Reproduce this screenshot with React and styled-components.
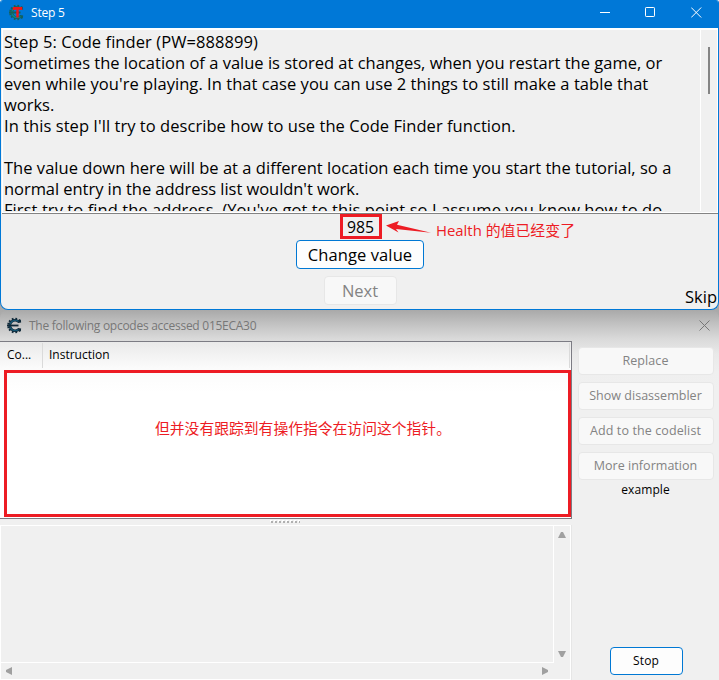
import React from "react";
import styled, { createGlobalStyle } from "styled-components";

const Global = createGlobalStyle`
  * { box-sizing: border-box; }
  body { margin: 0; background: #adadad; overflow: hidden; }
  #root { font-family: "Open Sans", "Noto Sans CJK SC", sans-serif; color: #000; }
`;

const Desktop = styled.main`
  width: 719px;
  height: 680px;
  display: flex;
  flex-direction: column;
  overflow: hidden;
  background: linear-gradient(#a6a6a6, #adadad) 0 300px / 100% 20px no-repeat, #f0f0f0;
`;

const TutorialWindow = styled.section`
  height: 310px;
  flex: none;
  display: flex;
  flex-direction: column;
  border: 1px solid #0078d7;
  border-top: 0;
  border-radius: 3px 3px 8px 8px;
  background: #f0f0f0;
  overflow: hidden;
  position: relative;
  z-index: 1;
`;

const TitleBar = styled.header`
  height: 28px;
  flex: none;
  display: flex;
  align-items: center;
  padding: 0 16px 3px 7px;
  background: #0078d7;
  color: #fff;
  font-size: 12px;
  line-height: 16px;
`;

const Title = styled.span`
  flex: 1;
  margin-left: 5px;
  white-space: nowrap;
  letter-spacing: ${(p) => p.$track || 0}px;
`;

const Caption = styled.div`
  display: flex;
  gap: 35px;
  svg { display: block; }
`;

const Memo = styled.div`
  height: 185px;
  flex: none;
  margin-left: 1px;
  display: flex;
  border: 1px solid #fff;
  border-top-width: 2px;
  overflow: hidden;
`;

const MemoText = styled.div`
  flex: 1;
  height: 181px;
  overflow: hidden;
  padding: 1px 0 0 1px;
  border-right: 1px solid #fff;
`;

const Line = styled.p`
  margin: 0;
  height: 21px;
  line-height: 21px;
  font-size: 16.5px;
  white-space: pre;
  letter-spacing: ${(p) => p.$track}px;
`;

const MemoScroll = styled.div`
  width: 16px;
  padding: 17px 0 0 7px;
`;

const Thumb = styled.div`
  width: 2px;
  height: 47px;
  background: #858585;
`;

const Controls = styled.div`
  flex: 1;
  margin-left: 1px;
  border-top: 1px solid #838383;
  display: grid;
  grid-template-columns: 1fr 128px 1fr;
`;

const ControlColumn = styled.div`
  display: flex;
  flex-direction: column;
  align-items: center;
`;

const ValueBox = styled.div`
  width: 42px;
  height: 25px;
  margin-left: 1px;
  border: 3px solid #ed1c24;
  font-size: 15.8px;
  line-height: 20px;
  text-align: center;
`;

const Button = styled.button`
  display: block;
  width: ${(p) => p.$w}px;
  height: ${(p) => p.$h}px;
  flex: none;
  padding: 0 0 ${(p) => p.$lift || 0}px;
  margin: ${(p) => p.$m || 0};
  border: 1px solid ${(p) => (p.disabled ? "#e7e7e7" : "#0078d4")};
  border-radius: 4px;
  background: ${(p) => (p.disabled ? "#f8f8f8" : "#fdfdfd")};
  color: ${(p) => (p.disabled ? "#838383" : "#000")};
  font-family: inherit;
  font-size: ${(p) => p.$size || 12.5}px;
  letter-spacing: ${(p) => p.$track || 0}px;
  line-height: 20px;
  white-space: nowrap;
`;

const Note = styled.div`
  display: flex;
  height: 40px;
  color: #ed1c24;
  font-size: 14.9px;
  line-height: 20px;
  white-space: nowrap;
  svg { flex: none; margin: 6px 4px 0 -38px; }
  span { padding-top: 6px; }
`;

const SkipColumn = styled.div`
  display: flex;
  align-items: flex-start;
  justify-content: space-between;
`;

const Skip = styled.span`
  align-self: flex-end;
  margin: 0 1px 1px -40px;
  font-size: 16.5px;
  line-height: 22px;
`;

const OpcodeWindow = styled.section`
  height: 370px;
  flex: none;
  display: flex;
  flex-direction: column;
  background: linear-gradient(#a9a9a9 0, #c2c2c2 14px, #dadada 29px, #e9e9e9 44px, #efefef 62px, #f0f0f0 80px);
  border-radius: 8px 8px 0 0;
`;

const OpcodeTitle = styled.header`
  height: 31px;
  flex: none;
  display: flex;
  align-items: center;
  padding: 0 9px 0 6px;
  color: #777;
  font-size: 12px;
  line-height: 16px;
`;

const Body = styled.div`
  flex: 1;
  display: flex;
`;

const Left = styled.div`
  width: 572px;
  display: flex;
  flex-direction: column;
`;

const ListView = styled.div`
  height: 178px;
  flex: none;
  display: flex;
  flex-direction: column;
  border: solid #7c7c84;
  border-width: 1px 1px 1px 0;
  background: linear-gradient(#eaeaea, #fbfbfb 26px, #fff 50px);
`;

const Columns = styled.div`
  height: 28px;
  flex: none;
  display: flex;
  font-size: 12px;
  line-height: 24px;
  padding: 1px 0 2px;
`;

const Column = styled.div`
  width: ${(p) => p.$w}px;
  border-right: 1px solid #dadada;
  padding-left: ${(p) => p.$pad}px;
`;

const Highlight = styled.div`
  width: 567px;
  height: 147px;
  margin-left: 4px;
  border: 3px solid #ed1c24;
  color: #ed1c24;
  font-size: 14.8px;
  line-height: 20px;
  padding: 45px 0 0 148px;
  white-space: nowrap;
`;

const Splitter = styled.div`
  height: 6px;
  flex: none;
  padding: 1px 0 0 270px;
  svg { display: block; }
`;

const DetailBox = styled.div`
  height: 155px;
  display: grid;
  grid-template-columns: 1fr 16px;
  grid-template-rows: 1fr 16px;
  border: 1px solid #fff;
  box-shadow: 1px 0 0 #e6e6e6;
  width: 571px;
`;

const DetailArea = styled.div`
  border-right: 1px solid #fff;
  border-bottom: 1px solid #fff;
`;

const VerticalBar = styled.div`
  display: flex;
  flex-direction: column;
  justify-content: space-between;
  padding: 5px 0 5px 4px;
`;

const HorizontalBar = styled.div`
  display: flex;
  align-items: center;
  justify-content: space-between;
  padding: 0 5px 0 4px;
`;

const Side = styled.aside`
  flex: 1;
  display: flex;
  flex-direction: column;
  align-items: center;
  padding: 6px 0 5px;
`;

const Stack = styled.div`
  display: flex;
  flex-direction: column;
  gap: 7px;
  flex: none;
`;

const Example = styled.span`
  flex: 1;
  font-size: 12px;
  line-height: 16px;
  margin-top: 2px;
  letter-spacing: 0.1px;
`;

const teeth = [50, 80, 110, 140, 165, 195, 220, 250, 280, 310];

function GearE({ color, edge }) {
  return (
    <g>
      {teeth.map((a) => (
        <rect key={a} x="14.4" y="7.6" width="2.4" height="1.8" fill={edge} transform={`rotate(${a} 9 8.5)`} />
      ))}
      <path d="M15 4.2L12.500 4.500A5.200 5.200 0 1 0 12.500 12.500L15 12.800" fill="none" stroke={edge} strokeWidth="2.7" />
      <path d="M12.500 4.500A5.200 5.200 0 1 0 12.500 12.500" fill="none" stroke={color} strokeWidth="1.300" />
      <path d="M1 8.500h11.500" stroke={edge} strokeWidth="1.800" />
    </g>
  );
}

function TutorialIcon() {
  return (
    <svg width="18" height="17" viewBox="0 0 18 17">
      <GearE color="#088a86" edge="#15605c" />
      <path d="M6 6V4.200h7V6M9.500 4v9.500" fill="none" stroke="#f01818" strokeWidth="2.4" />
    </svg>
  );
}

function OpcodeIcon() {
  return (
    <svg width="18" height="17" viewBox="0 0 18 17">
      <GearE color="#155a78" edge="#102838" />
    </svg>
  );
}

const Arrow = ({ d }) => (
  <svg width="8" height="8" viewBox="0 0 8 8" display="block">
    <path d={d} fill="#a0a0a0" />
  </svg>
);

const memo = [
  ["Step 5: Code finder (PW=888899)", 0.07],
  ["Sometimes the location of a value is stored at changes, when you restart the game, or", 0.003],
  ["even while you're playing. In that case you can use 2 things to still make a table that", 0.05],
  ["works.", 0],
  ["In this step I'll try to describe how to use the Code Finder function.", 0.05],
  ["", 0],
  ["The value down here will be at a different location each time you start the tutorial, so a", 0.028],
  ["normal entry in the address list wouldn't work.", -0.05],
  ["First try to find the address. (You've got to this point so I assume you know how to do", 0.07],
];

const actions = [
  ["Replace", 0.1],
  ["Show disassembler", 0.03],
  ["Add to the codelist", 0.11],
  ["More information", 0.03],
];

export default function App() {
  return (
    <Desktop>
      <Global />
      <TutorialWindow>
        <TitleBar>
          <TutorialIcon />
          <Title $track={-0.2}>Step 5</Title>
          <Caption>
            <svg width="11" height="11"><path d="M1 5.5h10" stroke="#fff" /></svg>
            <svg width="11" height="11"><rect x=".5" y=".5" width="9" height="9" rx=".7" fill="none" stroke="#fff" /></svg>
            <svg width="11" height="11"><path d="M.2.500l10 10m0-10l-10 10" stroke="#fff" /></svg>
          </Caption>
        </TitleBar>
        <Memo>
          <MemoText>
            {memo.map(([text, track], i) => <Line key={i} $track={track}>{text}</Line>)}
          </MemoText>
          <MemoScroll><Thumb /></MemoScroll>
        </Memo>
        <Controls>
          <span />
          <ControlColumn>
            <ValueBox>985</ValueBox>
            <Button $w={128} $h={29} $size={16.5} $track={0.1} $m="1px 0 0">Change value</Button>
            <Button $w={73} $h={29} $size={16.5} $m="7px 0 0" disabled>Next</Button>
          </ControlColumn>
          <SkipColumn>
            <Note>
              <svg width="46" height="18" viewBox="0 0 46 18">
                <path d="M0 5.5L13 1 11 4.8 45 12.7 10 9l2.500 3.500z" fill="#ed1c24" />
              </svg>
              <span>Health 的值已经变了</span>
            </Note>
            <Skip>Skip</Skip>
          </SkipColumn>
        </Controls>
      </TutorialWindow>
      <OpcodeWindow>
        <OpcodeTitle>
          <OpcodeIcon />
          <Title $track={-0.27}>The following opcodes accessed 015ECA30</Title>
          <svg width="11" height="11"><path d="M.5.5l10 10m0-10l-10 10" stroke="#777" /></svg>
        </OpcodeTitle>
        <Body>
          <Left>
            <ListView>
              <Columns>
                <Column $w={43} $pad={7}>Co...</Column>
                <Column $w={527} $pad={6}>Instruction</Column>
              </Columns>
              <Highlight>但并没有跟踪到有操作指令在访问这个指针。</Highlight>
            </ListView>
            <Splitter>
              <svg width="30" height="4">
                {[1, 5, 9, 13, 17, 21, 25, 29].map((x) => (
                  <g key={x}>
                    <rect x={x - 1} y="0" width="2" height="2" fill="#fff" />
                    <rect x={x} y="1" width="2" height="2" fill="#b0b0b0" />
                  </g>
                ))}
              </svg>
            </Splitter>
            <DetailBox>
              <DetailArea />
              <VerticalBar>
                <Arrow d="M0 7L3 1h2l3 6z" />
                <Arrow d="M0 1h8L5 7H3z" />
              </VerticalBar>
              <HorizontalBar>
                <Arrow d="M7 0v8L1 5V3z" />
                <Arrow d="M1 0v8l6-3V3z" />
              </HorizontalBar>
            </DetailBox>
          </Left>
          <Side>
            <Stack>
              {actions.map(([label, track]) => (
                <Button key={label} $w={136} $h={28} $track={track} disabled>{label}</Button>
              ))}
            </Stack>
            <Example>example</Example>
            <Button $w={73} $h={28} $size={12} $track={0.1} $lift={1} $m="0 0 0 1px">Stop</Button>
          </Side>
        </Body>
      </OpcodeWindow>
    </Desktop>
  );
}
